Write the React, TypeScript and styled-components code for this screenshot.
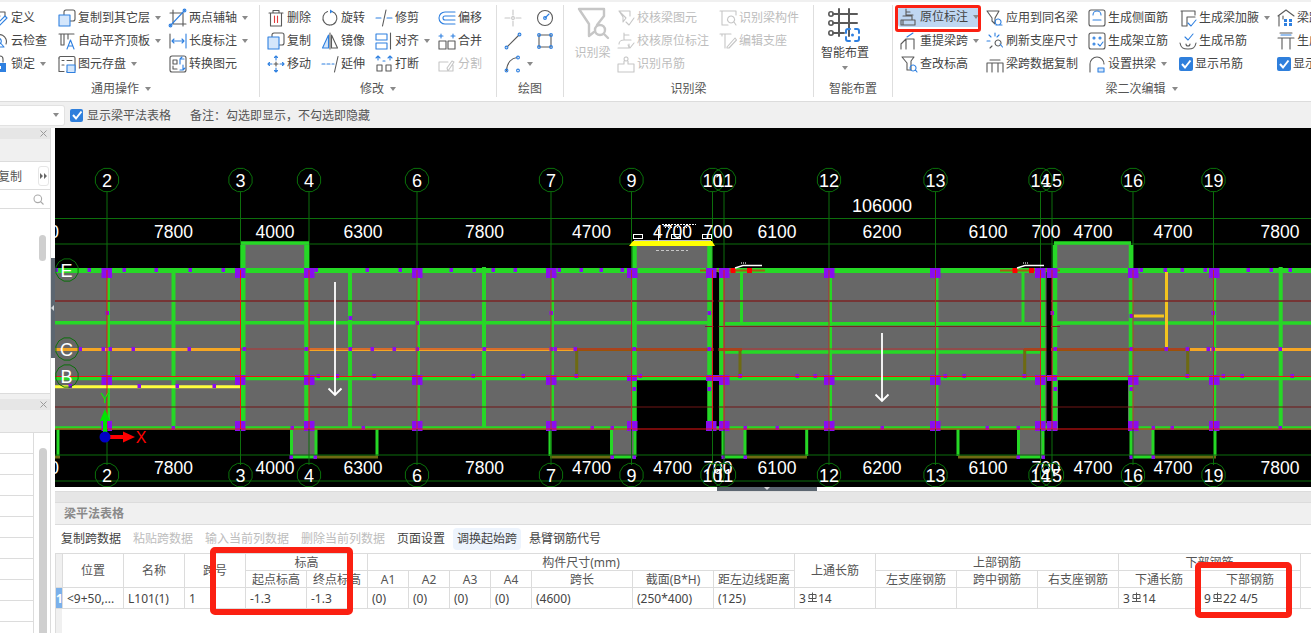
import React from 'react';
import styled, { createGlobalStyle, css } from 'styled-components';

const Global = createGlobalStyle`
  html, body { margin: 0; padding: 0; width: 1311px; height: 633px; overflow: hidden; background: #fff; }
  * { box-sizing: border-box; }
  body { font-family: "Noto Sans", "Noto Sans CJK SC", sans-serif; font-size: 12px; color: #444; }
`;

const Page = styled.div`
  position: relative; width: 1311px; height: 633px; overflow: hidden; display: flex; flex-direction: column;
`;

/* ---------- ribbon ---------- */
const Ribbon = styled.header`
  display: flex; flex: none; height: 102px; overflow: hidden; background: #fff;
  border-top: 2px solid #f0f0f0; border-bottom: 1px solid #dcdcdc; padding-left: 0;
`;
const Group = styled.section<{ $w: number; $first?: boolean }>`
  flex: none; width: ${p => p.$w}px; height: 92px; margin-top: 3px; display: flex; flex-direction: column;
  border-right: 1px solid #dedede; margin-left: ${p => (p.$first ? '-17px' : '0')};
`;
const Cols = styled.div<{ $pl: number }>`
  display: flex; flex: none; height: 71px; padding-left: ${p => p.$pl}px; padding-top: 1px;
`;
const Col = styled.div<{ $w: number }>`
  flex: none; width: ${p => p.$w}px; display: flex; flex-direction: column;
`;
const GroupLabel = styled.div`
  margin-top: auto; height: 19px; padding-top: 2px; display: flex; align-items: center; justify-content: center; gap: 6px;
  font-size: 12px; line-height: 17px; color: #555; white-space: nowrap;
`;
const Caret = styled.i`
  flex: none; width: 0; height: 0; border: 3.5px solid transparent; border-top: 4px solid #8a8a8a; border-bottom: 0;
`;
const Item = styled.div<{ $off?: boolean; $on?: boolean }>`
  height: 23px; display: flex; align-items: center; gap: 2px; white-space: nowrap; line-height: 16px;
  color: ${p => (p.$off ? '#bdbdbd' : '#444')};
  ${p => p.$on && css`
    height: 20px; margin: 1px 0 2px -2px; padding-left: 2px; width: 83px;
    background: #bfd7f2; border-radius: 3px;
  `}
`;
const ItemCaret = styled(Caret)`margin-left: 3px;`;
const Glyph = styled.svg<{ $off?: boolean; $s?: number }>`
  flex: none; width: ${p => p.$s ?? 18}px; height: ${p => p.$s ?? 18}px; fill: none; stroke-width: 1.1;
  stroke-linecap: round; stroke-linejoin: round; overflow: visible;
  .d { stroke: #5a5a5a; } .b { stroke: #2f80e0; } .r { stroke: #e23a3a; }
  .bf { stroke: #2f80e0; fill: #d4e6fb; } .bs { fill: #2f80e0; stroke: none; } .ds { fill: #4a4a4a; stroke: none; }
  ${p => p.$off && css`
    .d, .b, .r, .bf { stroke: #c6c6c6; } .bf { fill: none; } .bs, .ds { fill: #c6c6c6; }
  `}
`;
const Big = styled.div<{ $w: number; $off?: boolean }>`
  flex: none; width: ${p => p.$w}px; display: flex; flex-direction: column; align-items: center; padding-top: 2px;
  line-height: 16px; white-space: nowrap; color: ${p => (p.$off ? '#bdbdbd' : '#444')};
`;
const BigGap = styled.div<{ $h: number }>`flex: none; height: ${p => p.$h}px;`;
const Check = styled.span<{ $s?: number }>`
  flex: none; width: ${p => p.$s ?? 14}px; height: ${p => p.$s ?? 14}px; border-radius: 2px; background: #2f7fdc;
  display: flex; align-items: center; justify-content: center;
`;

const D = ({ d }: { d: string }) => <path className="d" d={d} />;
const B = ({ d }: { d: string }) => <path className="b" d={d} />;
const R = ({ d }: { d: string }) => <path className="r" d={d} />;
const BF = ({ d }: { d: string }) => <path className="bf" d={d} />;
const Dot = ({ x, y, r = 1.4, k = 'b' }: { x: number; y: number; r?: number; k?: string }) => <circle className={k} cx={x} cy={y} r={r} />;

const ICONS: Record<string, React.ReactNode> = {
  define: <><D d="M1 3H14V7M1 7H9M1 11H6M3 15V17H7" /><B d="M6 15L14 7l2 2-8 8H6z" /></>,
  cloud: <><D d="M4 15a7 7 0 1 1 11-3" /><B d="M7 6a3.2 3.2 0 1 0 .1 0M9.5 11L13 15H6" /></>,
  lock: <><D d="M6 7V4a3 3 0 0 1 6 0v3" /><path className="bs" d="M3 8h12v9H3z" /><path d="M8 11h2v3H8z" fill="#fff" /></>,
  copyLayer: <><path className="d" d="M8 1h7a2 2 0 0 1 2 2v7a2 2 0 0 1-2 2H8a2 2 0 0 1-2-2V3a2 2 0 0 1 2-2z" /><BF d="M1 6h11v11H1z" /></>,
  alignTop: <><D d="M1 2H16M3 2V13M3 13H6V2M10 2V7" /><B d="M9 17L12.5 8 16 17M10.5 14H14.5" /></>,
  save: <><path className="d" d="M1 3a1.500 1.500 0 0 1 1.500-1.500h13a1.500 1.500 0 0 1 1.500 1.500v12a1.500 1.500 0 0 1-1.500 1.500H9" /><D d="M1 3V16.500H6M4 5.500H6M9 5.500H14M4 10H6" /><BF d="M9 10h8v7.500H9z" /></>,
  twoPoint: <><D d="M4 1V15H17M1 4H14V17" /><B d="M1 17L16 1" /><Dot x={1.500} y={16.500} /><Dot x={15.500} y={1.500} /></>,
  dimension: <><D d="M1 2V16" /><B d="M17 2V16M3 9H15M5 7L3 9l2 2M13 7l2 2-2 2" /></>,
  convert: <><path className="d" d="M3 1h12a2 2 0 0 1 2 2v12a2 2 0 0 1-2 2H3a2 2 0 0 1-2-2V3a2 2 0 0 1 2-2z" /><D d="M4 5h4v4H4zM4 11v3h4" /><B d="M11 9V4h4M11 4l2-2M14 10v5h-3M14 15l2-2" /></>,
  trash: <><D d="M2 4H16M6 4V1.500H12V4M3.500 4V17H14.500V4" /><R d="M7.500 7V13.500M10.500 7V13.500" /></>,
  copy: <><path className="d" d="M7 1h8a2 2 0 0 1 2 2v8a2 2 0 0 1-2 2H7a2 2 0 0 1-2-2V3a2 2 0 0 1 2-2z" /><BF d="M1 5h11v12H1z" /></>,
  move: <><B d="M9 1V5M9 13V17M1 9H5M13 9H17M7.500 2.500L9 1l1.500 1.500M7.500 15.500L9 17l1.500-1.500M2.500 7.500L1 9l1.500 1.500M15.500 7.500L17 9l-1.500 1.500" /><D d="M9 7V11M7 9H11" /></>,
  rotate: <><path className="d" d="M11 2.400A7 7 0 1 1 6.500 2.500" /><path className="bs" d="M9 .5l3 2-3 2z" /></>,
  mirror: <><D d="M9 1V17" /><BF d="M7.500 3L1.500 16H7.500z" /><D d="M10.500 3L16.500 16H10.500z" /></>,
  extend: <><B d="M1 9H4M6 9H9M11 9H13" /><D d="M17 1.500L13.500 17" /></>,
  trim: <><B d="M1 9H6M12 9H17" /><D d="M11 1L7.500 17" /></>,
  align: <><B d="M1 2h11v6H1zM1 11h11v6H1z" /><D d="M15.500 1V17" /></>,
  breakIt: <><B d="M1 3l2-2 2 2M3 1v4M13 3l2-2 2 2M15 1v4M8 6h2" /><D d="M2 10h5v6H2zM11 10h5v6h-5z" /></>,
  offset: <><B d="M17 3H7a6 6 0 0 0 0 12H17M17 7H7a2 2 0 0 0 0 4H17" /></>,
  merge: <><B d="M1 4H5M3 2v4M13 4h4M15 2v4" /><D d="M1 9h7v8H1zM10 9h7v8h-7z" /></>,
  split: <><D d="M1 7h9M1 7v9h14V10M10 16l6-9-2-1-5 7z" /></>,
  cross: <><D d="M9 1V6M9 12V17M1 9H6M12 9H17" /><Dot x={9} y={9} k="d" /></>,
  circlePt: <><circle className="d" cx="9" cy="9" r="7.500" /><B d="M9 9L13 5" /><Dot x={9} y={9} /></>,
  line: <><D d="M3 15L15 3" /><Dot x={2.500} y={15.500} /><Dot x={15.500} y={2.500} /></>,
  rect: <><D d="M3 3h12v12H3z" /><Dot x={3} y={3} /><Dot x={15} y={3} /><Dot x={3} y={15} /><Dot x={15} y={15} /></>,
  arc: <><D d="M2.500 15.500C3 7 8 3 13 2.500" /><Dot x={2.500} y={15.500} /><Dot x={14} y={2.500} /><Dot x={14} y={15.500} /></>,
  checkBeam: <><D d="M2 2h11v5M2 2l7 7-3 4V8L2 2" /><B d="M9 13l3 3 5-7" /></>,
  checkOrig: <><D d="M7 1V8M7 3h5M2 12a5 4 0 0 1 5-4h7M1 16h11V12" /><B d="M11 13l2 3 4-5" /></>,
  recHanger: <><D d="M9 2a2 2 0 1 0 .1 0M7 6V9H1V17H17V9H11V6" /></>,
  recMember: <><D d="M1 2H17V6M3 2V16H9" /><B d="M12 7a3.500 3.500 0 1 0 .1 0M15 13l2 3" /></>,
  editSeat: <><D d="M1 2H12M6 2V16M3 4v-2" /><B d="M8 15L16 6l1.500 2L10 16H8z" /></>,
  origin: <><D d="M6 1V7H13M6 4H10M3 8H12V12M1 12H15V17H1zM3 17V12" /></>,
  apply: <><D d="M1 2H13L9 9V15L6 12V9z" /><B d="M12 10a3 3 0 1 0 .1 0M10 16H16" /></>,
  redo: <><D d="M1 17V12L6 7H14M6 7V17M14 7V17" /><B d="M7 5L13 1" /></>,
  refresh: <><B d="M9 1V4M3 3l2 2M13 3l-2 2M1 9H4" /><D d="M6 14l-2 2M12 8a3 3 0 1 0 .1 0" /><B d="M14 12l2.500 3" /></>,
  sideBar: <><path className="d" d="M3 1h12a2 2 0 0 1 2 2v12a2 2 0 0 1-2 2H3a2 2 0 0 1-2-2V3a2 2 0 0 1 2-2z" /><B d="M5 6a4 4 0 0 1 8 0M5 11H13" /></>,
  standBar: <><path className="d" d="M3 1h12a2 2 0 0 1 2 2v12a2 2 0 0 1-2 2H3a2 2 0 0 1-2-2V3a2 2 0 0 1 2-2z" /><Dot x={6} y={6} r={1} /><Dot x={12} y={6} r={1} /><Dot x={6} y={12} r={1} /><B d="M10 12l2 2 3-4" /></>,
  queryLvl: <><D d="M2 2H14L11 6V15H7V8z" /><B d="M13 10a3 3 0 1 0 .1 0M15.500 15L17 17" /></>,
  spanCopy: <><D d="M1 8H17M1 8V17M4 5H14M6 8V17M12 8V17M17 8V17" /></>,
  arch: <><D d="M2 17V9a7 7 0 0 1 14 0" /><BF d="M10 13h6v4h-6z" /></>,
  haunch: <><D d="M2 2H16V6M3 2V17H8V8H16" /><B d="M9 14l3 3 5-6" /></>,
  hanger: <><B d="M6 5l3 3 5-6" /><D d="M1 11c1 5 3 6 8 6s7-1 8-6M7 12a2 2 0 1 0 4 0" /></>,
  beamTable: <><D d="M1 7L9 1l8 6M2 7V17M6 7V10" /><path className="bs" d="M7 10h3v3H7zM12 10h3v3h-3zM7 14h3v3H7zM12 14h3v3h-3z" /></>,
  beamGen: <><D d="M3 1H15M1 6H17M5 6V17M13 6V17" /><B d="M4 3H14" /></>,
};

const BigFunnel = () => (
  <Glyph $off $s={32} viewBox="0 0 32 32">
    <path className="d" strokeWidth="2.400" d="M2 1H27V8L20 17M2 1L12 16V28L17 24" />
    <circle className="d" strokeWidth="2.400" cx="23" cy="22" r="5" />
    <path className="d" strokeWidth="2.400" d="M27 26L31 30" />
  </Glyph>
);
const BigGrid = () => (
  <Glyph $s={36} viewBox="0 0 36 36">
    <path className="d" strokeWidth="2" d="M12 1V28M22 1V28M6 6H30M6 15H30M6 25H17" />
    <circle className="d" strokeWidth="1.600" cx="4" cy="6" r="2.200" />
    <circle className="d" strokeWidth="1.600" cx="4" cy="15" r="2.200" />
    <circle className="d" strokeWidth="1.600" cx="4" cy="25" r="2.200" />
    <path className="b" strokeWidth="2" d="M19 25v-2a2 2 0 0 1 2-2h2M28 21h2a2 2 0 0 1 2 2v2M32 29v2a2 2 0 0 1-2 2h-2M23 33h-2a2 2 0 0 1-2-2v-2" />
    <circle className="bs" cx="25.500" cy="27" r="1.500" />
  </Glyph>
);
const Tick = () => (
  <svg width="12" height="12" viewBox="0 0 12 12" fill="none"><path d="M2 6l3 3.500L10.500 2.500" stroke="#fff" strokeWidth="2" /></svg>
);

type Cmd = { i?: string; t?: string; c?: boolean; off?: boolean; on?: boolean; chk?: boolean };
const Cmds = ({ list }: { list: Cmd[] }) => (
  <>
    {list.map(m => (
      <Item key={m.t ?? m.i} $off={m.off} $on={m.on}>
        {m.chk ? <Check><Tick /></Check> : <Glyph $off={m.off} viewBox="0 0 18 18">{ICONS[m.i as string]}</Glyph>}
        {m.t && <span>{m.t}</span>}
        {m.c && <ItemCaret />}
      </Item>
    ))}
  </>
);

/* ---------- option bar ---------- */
const OptionBar = styled.div`
  flex: none; height: 26px; display: flex; align-items: center; background: #f0f0f0; color: #555; white-space: nowrap;
`;
const Combo = styled.div`
  width: 65px; height: 21px; background: #fff; border: 1px solid #e2e2e2; border-left: 0; border-radius: 0 3px 3px 0;
  display: flex; align-items: center; justify-content: flex-end; padding-right: 5px;
`;
const OptCheck = styled(Check)`margin-left: 5px;`;
const OptText = styled.span<{ $gap: number }>`margin-left: ${p => p.$gap}px;`;

/* ---------- main ---------- */
const Main = styled.div`flex: 1; min-height: 0; display: flex; background: #fff;`;
const Side = styled.aside`
  flex: none; width: 51px; display: flex; flex-direction: column; background: #f0f0f0; border-right: 1px solid #dcdcdc;
`;
const PanelHead = styled.div`
  flex: none; height: 11px; background: #e6e6e6; display: flex; align-items: center; justify-content: flex-end; padding-right: 3px;
`;
const PanelStrip = styled.div<{ $h: number }>`
  flex: none; height: ${p => p.$h}px; background: #f0f0f0; border-bottom: 1px solid #dcdcdc;
`;
const PanelTop = styled.div`
  flex: none; height: 266px; display: flex; flex-direction: column; background: #fff; border-bottom: 1px solid #dcdcdc; overflow: hidden;
`;
const PanelBottom = styled.div`
  flex: none; margin-top: 5px; height: 234px; display: flex; flex-direction: column; background: #fff; overflow: hidden;
`;
const CopyRow = styled.div`
  flex: none; height: 28px; display: flex; align-items: center; justify-content: space-between; border-bottom: 1px solid #dcdcdc;
  overflow: hidden; padding: 1px 1px 0 0; color: #555;
`;
const CopyText = styled.span`margin-left: -2px;`;
const MoreBtn = styled.div`
  width: 11px; height: 20px; background: #fff; border: 1px solid #e6e6e6; border-radius: 3px; display: flex; align-items: center; justify-content: center;
`;
const SearchRow = styled.div`
  flex: none; height: 19px; display: flex; align-items: center; justify-content: flex-end; padding-right: 6px; border-bottom: 1px solid #dcdcdc;
`;
const Thumb = styled.div<{ $top: number; $h: number; $w: number; $left: number }>`
  flex: none; width: ${p => p.$w}px; height: ${p => p.$h}px; margin: ${p => p.$top}px 0 0 ${p => p.$left}px;
  border-radius: 4px; background: #cfcfcf;
`;
const ListArea = styled.div`flex: 1; display: flex; min-height: 0;`;
const ListCol = styled.div`flex: none; width: 34px; border-right: 1px solid #dcdcdc;`;
const ListRow = styled.div`height: 21px; border-bottom: 1px solid #dcdcdc;`;
const Handle = styled.div`
  flex: none; width: 4px; height: 100px; margin-top: 130px; background: #5c6670; display: flex; align-items: center;
`;
const HandleArrow = styled.i`
  width: 0; height: 0; border: 3px solid transparent; border-right: 3px solid #d5d8db; border-left: 0;
`;
const Work = styled.div`flex: 1; min-width: 0; display: flex; flex-direction: column;`;
const Canvas = styled.svg`display: block; flex: none; width: 1256px; height: 359px; background: #000;`;
const HSplit = styled.div`flex: none; height: 4px; background: #fff;`;
const HGrip = styled.div`
  width: 100px; height: 4px; margin-left: 662px; background: #5c6670; display: flex; justify-content: center;
`;
const HArrow = styled.i`
  width: 0; height: 0; border: 3px solid transparent; border-top: 3px solid #d5d8db; border-bottom: 0;
`;

/* ---------- beam table ---------- */
const Bottom = styled.section`flex: 1; min-height: 0; display: flex; flex-direction: column; overflow: hidden;`;
const BottomGrip = styled.div`flex: none; height: 12px; background: #e6e6e6; border-top: 1px solid #dcdcdc; border-bottom: 1px solid #dcdcdc;`;
const TitleBar = styled.div`
  flex: none; height: 22px; background: #f0f0f0; padding-left: 9px; border-bottom: 1px solid #dcdcdc;
  line-height: 22px; font-weight: 700; color: #8a8a8a; font-size: 12px;
`;
const Tools = styled.div`
  flex: none; height: 28px; display: flex; align-items: center; gap: 4px; padding-left: 2px; white-space: nowrap;
`;
const Tool = styled.span<{ $off?: boolean; $on?: boolean }>`
  padding: 0 4px; height: 22px; line-height: 22px; border-radius: 4px;
  color: ${p => (p.$off ? '#bdbdbd' : '#444')}; background: ${p => (p.$on ? '#edf4fd' : 'transparent')};
`;
const TableArea = styled.div`
  flex: 1; min-height: 0; overflow: hidden; border-left: 1px solid #dcdcdc;
  background: linear-gradient(to right, #f0f0f0 6px, #fff 6px);
`;
const Grid = styled.table`
  border-collapse: collapse; table-layout: fixed; width: 1275px; margin-left: -1px; background: #fff; font-size: 12px;
  th, td { border: 1px solid #dcdcdc; padding: 0; overflow: hidden; white-space: nowrap; }
  th { font-weight: 400; text-align: center; color: #555; height: 17px; line-height: 15px; }
  td { height: 21px; padding-left: 4px; color: #444; line-height: 19px; }
`;
const CornerTh = styled.th`background: #f0f0f0;`;
const RowNo = styled.td`
  && { background: #7ab0ea; color: #fff; padding: 0; text-align: center; font-weight: 700; }
`;
const Bar = styled.svg`display: inline-block; width: 11px; height: 11px; margin: 0 0 3px 1px; vertical-align: middle;`;
const Rebar = () => (
  <Bar viewBox="0 0 11 11" fill="none" stroke="#555" strokeWidth="1"><path d="M2 2.500H9V6.500H2zM5.500 .5V9M1 9.500H10" /></Bar>
);

const Mark = styled.div<{ $x: number; $y: number; $w: number; $h: number; $b: number; $r: number }>`
  position: absolute; left: ${p => p.$x}px; top: ${p => p.$y}px; width: ${p => p.$w}px; height: ${p => p.$h}px;
  border: ${p => p.$b}px solid #fb2012; border-radius: ${p => p.$r}px; pointer-events: none;
`;

/* ---------- drawing ---------- */
const AXES: [string, number][] = [['2', 107], ['3', 240.5], ['4', 309], ['6', 417], ['7', 551], ['9', 631.5], ['10', 712.5], ['11', 724], ['12', 829], ['13', 935.5], ['14', 1040.5], ['15', 1052], ['16', 1133], ['19', 1213.5]];
const DIMS: [string, number][] = [['0', 54], ['7800', 173.5], ['4000', 275], ['6300', 363], ['7800', 484.5], ['4700', 591.5], ['4700', 672.5], ['700', 718], ['6100', 777], ['6200', 882], ['6100', 988], ['700', 1046], ['4700', 1093], ['4700', 1173], ['7800', 1280]];
const GRAY: number[][] = [[55, 270, 658, 110], [55, 380, 581, 48], [708, 380, 5, 48], [719, 270, 328, 158], [1052, 270, 259, 110], [1052, 380, 6, 48], [1128, 380, 183, 48], [241, 244, 68, 26], [633, 245, 79, 25], [1054, 244, 77, 26], [291, 428, 25, 29], [612, 428, 23, 29], [723, 428, 22, 29], [1018, 428, 25, 29], [1131, 428, 22, 29]];
const G = '#26d826';
const HB: number[][] = [[55, 1311, 270.5, 5], [55, 709, 322.7, 3.5], [725, 1041, 323.8, 3.5], [1054, 1311, 323, 3.5], [725, 1041, 352, 3.5], [55, 1311, 378.5, 3.5], [55, 636, 428, 3.5], [708, 1058, 428, 3.5], [1128, 1311, 428, 3.5], [241, 309, 243, 3.5], [634, 712, 245, 1.500], [1054, 1131, 243, 3.5], [291, 316, 457, 3], [612, 635, 457, 3], [723, 745, 457, 3], [1018, 1043, 457, 3], [1131, 1153, 457, 3]];
const VB: number[][] = [[108.5, 270, 428, 3], [173.5, 268, 428, 4], [243, 245, 428, 5], [306.7, 245, 428, 5], [350, 268, 428, 4], [418.5, 270, 428, 3], [484, 267, 428, 4], [552.5, 270, 428, 3], [634.5, 245, 428, 4.5], [709.5, 245, 428, 4.5], [721.5, 270, 428, 4.5], [741.5, 270, 323, 3], [830.5, 270, 428, 3], [937, 270, 428, 3], [1023, 270, 323, 3], [1043, 270, 428, 4.5], [1055, 245, 428, 4.5], [1131, 245, 428, 4.5], [1214.7, 270, 428, 3], [1280.7, 267, 428, 4],
  [58, 428, 456, 3], [291.5, 428, 457, 3], [316, 428, 457, 3], [377, 428, 456, 3], [550, 428, 456, 3], [611.5, 428, 457, 3], [635, 428, 457, 3], [723, 428, 457, 3], [745, 428, 457, 3], [806.7, 428, 456, 3], [958, 428, 456, 3], [1018.5, 428, 457, 3], [1043, 428, 457, 3], [1131, 428, 457, 3], [1153, 428, 457, 3], [1215, 428, 456, 3]];
const OLIVE: number[][] = [[316, 378, 457], [550, 612, 457], [745, 807, 457], [958, 1018, 457], [1153, 1216, 457], [55, 60, 457]];
const OLV: number[][] = [[576.7, 349, 378], [740, 349, 378], [1024.7, 349, 378], [1187.7, 349, 378]];
const PURPLE: number[][] = [];
[101.5, 235, 304, 412, 546, 627, 706, 719, 824, 930, 1035, 1047, 1128, 1209].forEach(x => { PURPLE.push([x, 268, 10.5, 10]); PURPLE.push([x, 421, 10.5, 10]); });
[101.5, 235, 304, 412, 546, 824, 719, 930, 1035, 1128, 1209].forEach(x => PURPLE.push([x, 375, 10.5, 10]));
[627, 706, 714, 1047].forEach(x => PURPLE.push([x, 375, 10, 6]));
const TICKS: number[][] = [[56, 270], [89, 270], [124, 270], [156, 270], [190, 270], [223, 270], [316, 270], [367, 270], [400, 270], [451, 270], [474, 270], [493, 270], [515, 270], [559, 270], [581, 270], [601, 270], [622, 270], [1141, 270], [1165, 270], [1182, 270], [1205, 270], [1248, 270], [1271, 270], [1290, 270],
  [107, 313], [350, 318], [417, 323], [551, 313], [709, 313], [1052, 313], [1131, 316], [1213, 313],
  [80, 349], [103, 349], [110, 349], [133, 349], [189, 349], [244, 349], [306, 349], [350, 349], [372, 349], [394, 349], [417, 349], [484, 349], [551, 349], [555, 349], [575, 349], [634, 349], [709, 349], [1055, 349], [1131, 349], [1166, 349], [1187, 349], [1208, 349], [1213, 349], [1280, 349],
  [318, 376], [337, 376], [374, 376], [473, 376], [523, 376], [576, 376], [640, 376], [740, 376], [797, 376], [815, 376], [945, 376], [964, 376], [1024, 376], [1187, 376], [1223, 376], [1242, 376], [1292, 376],
  [70, 386], [139, 386], [177, 386], [214, 386], [634, 389], [709, 389], [1055, 389], [1131, 389],
  [173, 428], [292, 428], [363, 428], [612, 428], [592, 428], [777, 428], [745, 428], [882, 428], [987, 428], [1018, 428], [1153, 428], [1172, 428], [1280, 428],
  [291, 457], [315, 457], [612, 457], [634, 457], [723, 457], [745, 457], [1018, 457], [1043, 457], [1131, 457], [1153, 457]];
const REDV: [number, string][] = [[107, '#f01010'], [240.5, '#f01010'], [309, '#e01a1a'], [417, '#c03030'], [551, '#a83a2a'], [631.5, '#b53030'], [712.5, '#e01a1a'], [724, '#e01a1a'], [829, '#b53030'], [935.5, '#b53030'], [1040.5, '#d02020'], [1052, '#d02020'], [1133, '#c03030'], [1213.5, '#b53030']];

const polygon = (cx: number, cy: number, r: number, n = 12) =>
  Array.from({ length: n }, (_, i) => {
    const a = (Math.PI * 2 * (i + 0.5)) / n;
    return `${(cx + r * Math.cos(a)).toFixed(1)},${(cy + r * Math.sin(a)).toFixed(1)}`;
  }).join(' ');

const Drawing = () => {
  const LINE = '#0c6e0c';
  const BUBBLE = '#0a700a';
  return (
    <Canvas viewBox="55 128 1256 359" fontFamily="'Liberation Sans', sans-serif">
      {AXES.map(([n, x]) => <line key={n} x1={x} x2={x} y1={192} y2={270} stroke={LINE} />)}
      {[218.5, 244].map(y => <line key={y} x1={55} x2={1311} y1={y} y2={y} stroke={LINE} />)}
      {GRAY.map((r, i) => <rect key={i} x={r[0]} y={r[1]} width={r[2]} height={r[3]} fill="#676767" />)}
      {HB.map((b, i) => <line key={i} x1={b[0]} x2={b[1]} y1={b[2]} y2={b[2]} stroke={G} strokeWidth={b[3]} />)}
      {VB.map((b, i) => <line key={i} x1={b[0]} x2={b[0]} y1={b[1]} y2={b[2]} stroke={G} strokeWidth={b[3]} />)}
      {OLIVE.map((b, i) => <line key={i} x1={b[0]} x2={b[1]} y1={b[2]} y2={b[2]} stroke="#6e6a12" strokeWidth={3} />)}
      {OLV.map((b, i) => <line key={i} x1={b[0]} x2={b[0]} y1={b[1]} y2={b[2]} stroke="#6e6a12" strokeWidth={3} />)}
      <line x1={700} x2={765} y1={270.5} y2={270.5} stroke="#a85a14" strokeWidth={2} />
      <line x1={1000} x2={1060} y1={270.5} y2={270.5} stroke="#a85a14" strokeWidth={2} />
      <line x1={55} x2={240} y1={349.5} y2={349.5} stroke="#f5a623" strokeWidth={3} />
      <line x1={309} x2={575} y1={349.5} y2={349.5} stroke="#f5a623" strokeWidth={3} />
      <line x1={1188} x2={1311} y1={349.5} y2={349.5} stroke="#f5a623" strokeWidth={3} />
      <line x1={575} x2={742} y1={349.5} y2={349.5} stroke="#9c5208" strokeWidth={3} />
      <line x1={1024} x2={1190} y1={349.5} y2={349.5} stroke="#9c5208" strokeWidth={3} />
      <line x1={240} x2={1190} y1={349} y2={349} stroke="#b83232" />
      <line x1={55} x2={240} y1={386.7} y2={386.7} stroke="#ffff3c" strokeWidth={3} />
      <line x1={1166.5} x2={1166.5} y1={272} y2={349} stroke="#f3c41f" strokeWidth={3} />
      <line x1={1134} x2={1164} y1={316} y2={316} stroke="#f3c41f" strokeWidth={3} />
      <line x1={55} x2={1311} y1={301} y2={301} stroke="#7b2424" strokeWidth={1.500} />
      <line x1={55} x2={1311} y1={407} y2={407} stroke="#701616" />
      <line x1={705} x2={1060} y1={326.5} y2={326.5} stroke="#7b2424" />
      <rect x={713.5} y={272} width={5} height={151} fill="#000" />
      <rect x={1046.5} y={272} width={4.500} height={151} fill="#000" />
      {PURPLE.map((p, i) => <rect key={i} x={p[0]} y={p[1]} width={p[2]} height={p[3]} fill="#8a0cf0" />)}
      {TICKS.map((t, i) => <rect key={i} x={t[0] - 1.500} y={t[1] - 2} width={3.500} height={4} fill="#8a0cf0" />)}
      {REDV.map(([n, c]) => <line key={n} x1={n} x2={n} y1={270} y2={429} stroke={c} />)}
      <line x1={55} x2={1311} y1={376.5} y2={376.5} stroke="#f01414" />
      <line x1={55} x2={1311} y1={429} y2={429} stroke="#e81414" />
      {AXES.map(([n, x]) => <line key={n} x1={x} x2={x} y1={429} y2={465} stroke={LINE} />)}
      {[455, 481].map(y => <line key={y} x1={55} x2={1311} y1={y} y2={y} stroke={LINE} />)}
      <polygon points="629,246 633,241 712,241 715,246" fill="#ffff00" />
      <line x1={634} x2={711} y1={240.500} y2={240.500} stroke="#b8b8c8" />
      <rect x={633.5} y={234.5} width={9} height={4} fill="none" stroke="#fff" />
      <rect x={671.5} y={234.5} width={9} height={4} fill="none" stroke="#fff" />
      <rect x={702.5} y={234.5} width={9} height={4} fill="none" stroke="#fff" />
      <line x1={662} x2={696} y1={224.500} y2={224.500} stroke="#fff" strokeDasharray="2 1" />
      <line x1={665} x2={690} y1={227.500} y2={227.500} stroke="#fff" strokeDasharray="1 2" />
      <line x1={658.500} x2={658.500} y1={229} y2={241} stroke="#fff" />
      <line x1={656} x2={688} y1={250.500} y2={250.500} stroke="#c8c8c8" strokeDasharray="3 2" />
      <rect x={730.500} y={268} width={5} height={5} fill="#ff0000" />
      <rect x={747} y={268} width={5} height={5} fill="#ff0000" />
      <path d="M735 268L743 265.500H762" fill="none" stroke="#fff" strokeWidth="1.500" />
      <rect x={1012.500} y={268} width={5} height={5} fill="#ff0000" />
      <rect x={1029} y={268} width={5} height={5} fill="#ff0000" />
      <path d="M1017 268L1025 265.500H1044" fill="none" stroke="#fff" strokeWidth="1.500" />
      <path d="M741 263h6M1023 263h6" stroke="#bbb" strokeWidth="1.500" strokeDasharray="1 1" />
      <path d="M335 282V395M328.500 388.500L335 395l6.500-6.500" fill="none" stroke="#fff" strokeWidth="1.800" />
      <path d="M882 333V401M875.500 394.500L882 401l6.500-6.500" fill="none" stroke="#fff" strokeWidth="1.800" />
      <path d="M105 436V420" stroke="#00e600" strokeWidth="4" />
      <polygon points="100,421 105,409 110,421" fill="#00e600" />
      <text x={105} y={403} fontSize="14" fill="#00e600" textAnchor="middle">Y</text>
      <path d="M105 437H124" stroke="#ff0000" strokeWidth="4" />
      <polygon points="123,431.500 135,437 123,442.500" fill="#ff0000" />
      <text x={141} y={443} fontSize="16" fill="#ff0000" textAnchor="middle">X</text>
      <circle cx={105} cy={437} r={5.500} fill="#0000c8" />
      <text x={882} y={212} fontSize="18" fill="#fff" textAnchor="middle">106000</text>
      {DIMS.map(([t, x], i) => (
        <g key={i} fill="#fff" fontSize="17.500" textAnchor="middle">
          <text x={x} y={238}>{t}</text>
          <text x={x} y={474}>{t}</text>
        </g>
      ))}
      {AXES.map(([n, x]) => (
        <g key={n} textAnchor="middle" fontSize="18">
          <polygon points={polygon(x, 180, 12)} fill="none" stroke={BUBBLE} />
          <text x={x} y={186.500} fill="#fff">{n}</text>
          <polygon points={polygon(x, 475, 12)} fill="none" stroke={BUBBLE} />
          <text x={x} y={481.500} fill="#fff">{n}</text>
        </g>
      ))}
      {[['E', 270], ['C', 349], ['B', 376]].map(([n, y]) => (
        <g key={n as string} textAnchor="middle" fontSize="18">
          <polygon points={polygon(67, y as number, 11.500)} fill="none" stroke={BUBBLE} />
          <text x={66.500} y={(y as number) + 6.500} fill="#fff">{n}</text>
        </g>
      ))}
    </Canvas>
  );
};

const Close = () => (
  <svg width="7" height="7" viewBox="0 0 7 7" fill="none" stroke="#9a9a9a"><path d="M.5 .5l6 6M6.500 .5l-6 6" /></svg>
);
const Lens = () => (
  <svg width="11" height="11" viewBox="0 0 11 11" fill="none" stroke="#aaa" strokeWidth="1.100"><circle cx="4.800" cy="4.800" r="3.800" /><path d="M7.500 7.500L10.500 10.500" /></svg>
);
const DoubleArrow = () => (
  <svg width="7" height="6" viewBox="0 0 7 6" fill="#666"><path d="M0 0l3 3-3 3zM4 0l3 3-3 3z" /></svg>
);

const COLS = [7, 61, 61, 61, 61, 61, 41, 41, 41, 41, 101, 81, 81, 81, 81, 81, 81, 81, 101, 30];

export default function App() {
  return (
    <Page>
      <Global />
      <Ribbon>
        <Group $w={277} $first>
          <Cols $pl={8}>
            <Col $w={67}><Cmds list={[{ i: 'define', t: '定义' }, { i: 'cloud', t: '云检查' }, { i: 'lock', t: '锁定', c: true }]} /></Col>
            <Col $w={111}><Cmds list={[{ i: 'copyLayer', t: '复制到其它层', c: true }, { i: 'alignTop', t: '自动平齐顶板', c: true }, { i: 'save', t: '图元存盘', c: true }]} /></Col>
            <Col $w={85}><Cmds list={[{ i: 'twoPoint', t: '两点辅轴', c: true }, { i: 'dimension', t: '长度标注', c: true }, { i: 'convert', t: '转换图元' }]} /></Col>
          </Cols>
          <GroupLabel>通用操作<Caret /></GroupLabel>
        </Group>
        <Group $w={237}>
          <Cols $pl={7}>
            <Col $w={54}><Cmds list={[{ i: 'trash', t: '删除' }, { i: 'copy', t: '复制' }, { i: 'move', t: '移动' }]} /></Col>
            <Col $w={54}><Cmds list={[{ i: 'rotate', t: '旋转' }, { i: 'mirror', t: '镜像' }, { i: 'extend', t: '延伸' }]} /></Col>
            <Col $w={63}><Cmds list={[{ i: 'trim', t: '修剪' }, { i: 'align', t: '对齐', c: true }, { i: 'breakIt', t: '打断' }]} /></Col>
            <Col $w={50}><Cmds list={[{ i: 'offset', t: '偏移' }, { i: 'merge', t: '合并' }, { i: 'split', t: '分割', off: true }]} /></Col>
          </Cols>
          <GroupLabel>修改<Caret /></GroupLabel>
        </Group>
        <Group $w={67}>
          <Cols $pl={7}>
            <Col $w={32}><Cmds list={[{ i: 'cross', off: true }, { i: 'line' }, { i: 'arc', c: true }]} /></Col>
            <Col $w={20}><Cmds list={[{ i: 'circlePt' }, { i: 'rect' }]} /></Col>
          </Cols>
          <GroupLabel>绘图</GroupLabel>
        </Group>
        <Group $w={250}>
          <Cols $pl={4}>
            <Big $w={49} $off><BigFunnel /><BigGap $h={5} />识别梁</Big>
            <Col $w={102}><Cmds list={[{ i: 'checkBeam', t: '校核梁图元', off: true }, { i: 'checkOrig', t: '校核原位标注', off: true }, { i: 'recHanger', t: '识别吊筋', off: true }]} /></Col>
            <Col $w={90}><Cmds list={[{ i: 'recMember', t: '识别梁构件', off: true }, { i: 'editSeat', t: '编辑支座', off: true }]} /></Col>
          </Cols>
          <GroupLabel>识别梁</GroupLabel>
        </Group>
        <Group $w={79}>
          <Cols $pl={0}>
            <Big $w={62}><BigGrid /><BigGap $h={1} />智能布置<BigGap $h={5} /><Caret /></Big>
          </Cols>
          <GroupLabel>智能布置</GroupLabel>
        </Group>
        <Group $w={498}>
          <Cols $pl={7}>
            <Col $w={86}><Cmds list={[{ i: 'origin', t: '原位标注', c: true, on: true }, { i: 'redo', t: '重提梁跨', c: true }, { i: 'queryLvl', t: '查改标高' }]} /></Col>
            <Col $w={102}><Cmds list={[{ i: 'apply', t: '应用到同名梁' }, { i: 'refresh', t: '刷新支座尺寸' }, { i: 'spanCopy', t: '梁跨数据复制' }]} /></Col>
            <Col $w={91}><Cmds list={[{ i: 'sideBar', t: '生成侧面筋' }, { i: 'standBar', t: '生成架立筋' }, { i: 'arch', t: '设置拱梁', c: true }]} /></Col>
            <Col $w={98}><Cmds list={[{ i: 'haunch', t: '生成梁加腋', c: true }, { i: 'hanger', t: '生成吊筋' }, { t: '显示吊筋', chk: true }]} /></Col>
            <Col $w={90}><Cmds list={[{ i: 'beamTable', t: '梁跨分类' }, { i: 'beamGen', t: '生成土建' }, { t: '显示标注', chk: true }]} /></Col>
          </Cols>
          <GroupLabel>梁二次编辑<Caret /></GroupLabel>
        </Group>
      </Ribbon>

      <OptionBar>
        <Combo><Caret /></Combo>
        <OptCheck $s={13}><Tick /></OptCheck>
        <OptText $gap={4}>显示梁平法表格</OptText>
        <OptText $gap={19}>备注：勾选即显示，不勾选即隐藏</OptText>
      </OptionBar>

      <Main>
        <Side>
          <PanelTop>
            <PanelHead><Close /></PanelHead>
            <PanelStrip $h={23} />
            <CopyRow><CopyText>复制</CopyText><MoreBtn><DoubleArrow /></MoreBtn></CopyRow>
            <SearchRow><Lens /></SearchRow>
            <Thumb $top={26} $h={26} $w={7} $left={39} />
          </PanelTop>
          <PanelBottom>
            <PanelHead><Close /></PanelHead>
            <PanelStrip $h={23} />
            <ListArea>
              <ListCol>{Array.from({ length: 10 }, (_, i) => <ListRow key={i} />)}</ListCol>
              <Thumb $top={15} $h={200} $w={8} $left={5} />
            </ListArea>
          </PanelBottom>
        </Side>
        <Handle><HandleArrow /></Handle>
        <Work>
          <Drawing />
          <HSplit><HGrip><HArrow /></HGrip></HSplit>
          <Bottom>
            <BottomGrip />
            <TitleBar>梁平法表格</TitleBar>
            <Tools>
              <Tool>复制跨数据</Tool>
              <Tool $off>粘贴跨数据</Tool>
              <Tool $off>输入当前列数据</Tool>
              <Tool $off>删除当前列数据</Tool>
              <Tool>页面设置</Tool>
              <Tool $on>调换起始跨</Tool>
              <Tool>悬臂钢筋代号</Tool>
            </Tools>
            <TableArea>
              <Grid>
                <colgroup>{COLS.map((w, i) => <col key={i} width={w} />)}</colgroup>
                <thead>
                  <tr>
                    <CornerTh rowSpan={2} />
                    <th rowSpan={2}>位置</th>
                    <th rowSpan={2}>名称</th>
                    <th rowSpan={2}>跨号</th>
                    <th colSpan={2}>标高</th>
                    <th colSpan={7}>构件尺寸(mm)</th>
                    <th rowSpan={2}>上通长筋</th>
                    <th colSpan={3}>上部钢筋</th>
                    <th colSpan={2}>下部钢筋</th>
                    <th rowSpan={2} />
                  </tr>
                  <tr>
                    <th>起点标高</th><th>终点标高</th>
                    <th>A1</th><th>A2</th><th>A3</th><th>A4</th>
                    <th>跨长</th><th>截面(B*H)</th><th>距左边线距离</th>
                    <th>左支座钢筋</th><th>跨中钢筋</th><th>右支座钢筋</th>
                    <th>下通长筋</th><th>下部钢筋</th>
                  </tr>
                </thead>
                <tbody>
                  <tr>
                    <RowNo>1</RowNo>
                    <td>&lt;9+50,...</td><td>L101(1)</td><td>1</td>
                    <td>-1.3</td><td>-1.3</td>
                    <td>(0)</td><td>(0)</td><td>(0)</td><td>(0)</td>
                    <td>(4600)</td><td>(250*400)</td><td>(125)</td>
                    <td>3<Rebar />14</td>
                    <td /><td /><td />
                    <td>3<Rebar />14</td>
                    <td>9<Rebar />22 4/5</td>
                    <td />
                  </tr>
                </tbody>
              </Grid>
            </TableArea>
          </Bottom>
        </Work>
      </Main>

      <Mark $x={895} $y={5} $w={86} $h={27} $b={3} $r={3} />
      <Mark $x={210} $y={547} $w={143} $h={68} $b={6} $r={5} />
      <Mark $x={1195} $y={562} $w={97} $h={56} $b={6} $r={5} />
    </Page>
  );
}
